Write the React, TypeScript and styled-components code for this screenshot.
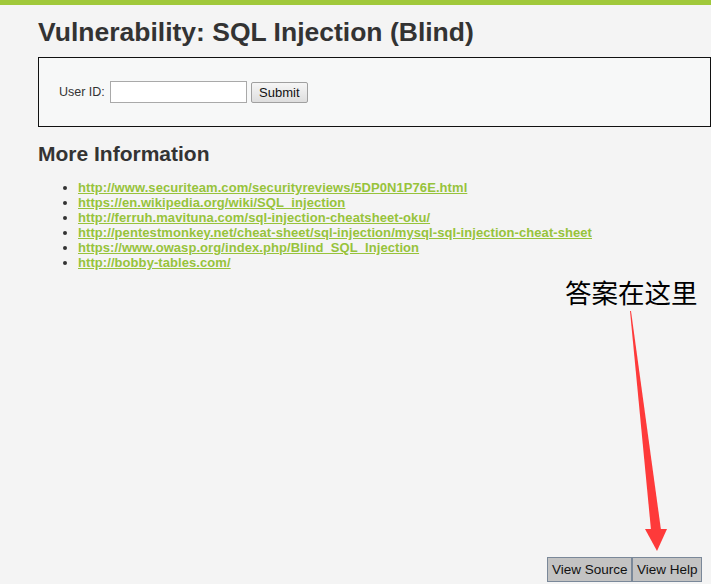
import React from "react";
import styled, { createGlobalStyle } from "styled-components";

const GlobalStyle = createGlobalStyle`
  html, body {
    margin: 0;
    padding: 0;
    background: #f4f4f4;
    font-family: "Liberation Sans", Arial, sans-serif;
    color: #333;
  }
`;

const Page = styled.div`
  position: relative;
  min-height: 100vh;
  display: flex;
  flex-direction: column;
  box-sizing: border-box;
`;

const TopBar = styled.div`
  height: 5px;
  background: #a0c83a;
`;

const Body = styled.div`
  flex: 1;
  padding: 0 20px 0 38px;
`;

const Title = styled.h1`
  margin: 12px 0 10px;
  font-size: 26.5px;
  line-height: 30px;
  font-weight: bold;
  color: #333;
`;

const FormBox = styled.div`
  width: 651px;
  height: 68px;
  border: 1px solid #111;
  background: #f7f8f8;
  display: flex;
  align-items: center;
  padding-left: 20px;
  box-sizing: content-box;
`;

const Label = styled.label`
  font-size: 12.5px;
  color: #333;
  margin-right: 5px;
`;

const TextInput = styled.input`
  width: 133px;
  height: 18px;
  padding: 1px;
  border: 1px solid #a9a9a9;
  background: #fff;
  margin: 0 4px 0 0;
`;

const SubmitBtn = styled.button`
  width: 57px;
  height: 21px;
  padding: 0;
  border: 1px solid #a0a0a0;
  border-radius: 2px;
  background: linear-gradient(#f6f6f6, #dedede);
  font-family: "Liberation Sans", Arial, sans-serif;
  font-size: 13px;
  color: #111;
`;

const SubTitle = styled.h2`
  margin: 15px 0 14px;
  font-size: 21px;
  line-height: 24px;
  font-weight: bold;
  color: #333;
`;

const LinkList = styled.ul`
  margin: 0;
  padding-left: 40px;
  font-size: 13px;
  line-height: 15px;
  letter-spacing: 0.07px;
  color: #333;
`;

const LinkItem = styled.li`
  font-weight: bold;
`;

const ExtLink = styled.a`
  color: #97c33b;
  text-decoration: underline;
`;

const Note = styled.div`
  position: absolute;
  left: 565px;
  top: 274px;
  font-family: "Noto Sans CJK SC", sans-serif;
  font-size: 26.5px;
  line-height: 36px;
  color: #000;
`;

const Arrow = styled.svg`
  position: absolute;
  left: 620px;
  top: 305px;
`;

const Footer = styled.div`
  display: flex;
  justify-content: flex-end;
  padding: 0 9px 2px 0;
`;

const FooterBtn = styled.button<{ $pad: number }>`
  height: 25px;
  padding: 0 ${(p) => p.$pad}px;
  border: 1px solid #7a8899;
  background: #c3c3c3;
  font-family: "Liberation Sans", Arial, sans-serif;
  font-size: 13.5px;
  color: #111;
`;

const links = [
  "http://www.securiteam.com/securityreviews/5DP0N1P76E.html",
  "https://en.wikipedia.org/wiki/SQL_injection",
  "http://ferruh.mavituna.com/sql-injection-cheatsheet-oku/",
  "http://pentestmonkey.net/cheat-sheet/sql-injection/mysql-sql-injection-cheat-sheet",
  "https://www.owasp.org/index.php/Blind_SQL_Injection",
  "http://bobby-tables.com/",
];

const App = () => {
  return (
    <Page>
      <GlobalStyle />
      <TopBar />
      <Body>
        <Title>Vulnerability: SQL Injection (Blind)</Title>
        <FormBox>
          <Label>User ID:</Label>
          <TextInput type="text" />
          <SubmitBtn>Submit</SubmitBtn>
        </FormBox>
        <SubTitle>More Information</SubTitle>
        <LinkList>
          {links.map((l) => (
            <LinkItem key={l}>
              <ExtLink href="#">{l}</ExtLink>
            </LinkItem>
          ))}
        </LinkList>
      </Body>
      <Footer>
        <FooterBtn $pad={4}>View Source</FooterBtn>
        <FooterBtn $pad={3.5}>View Help</FooterBtn>
      </Footer>
      <Note>答案在这里</Note>
      <Arrow width="60" height="250" viewBox="0 0 60 250">
        <polygon points="10,6 11,6 41,225 31,225" fill="#fe3a3a" />
        <polygon points="25,224 47,224 37,246" fill="#fe3a3a" />
      </Arrow>
    </Page>
  );
};

export default App;
